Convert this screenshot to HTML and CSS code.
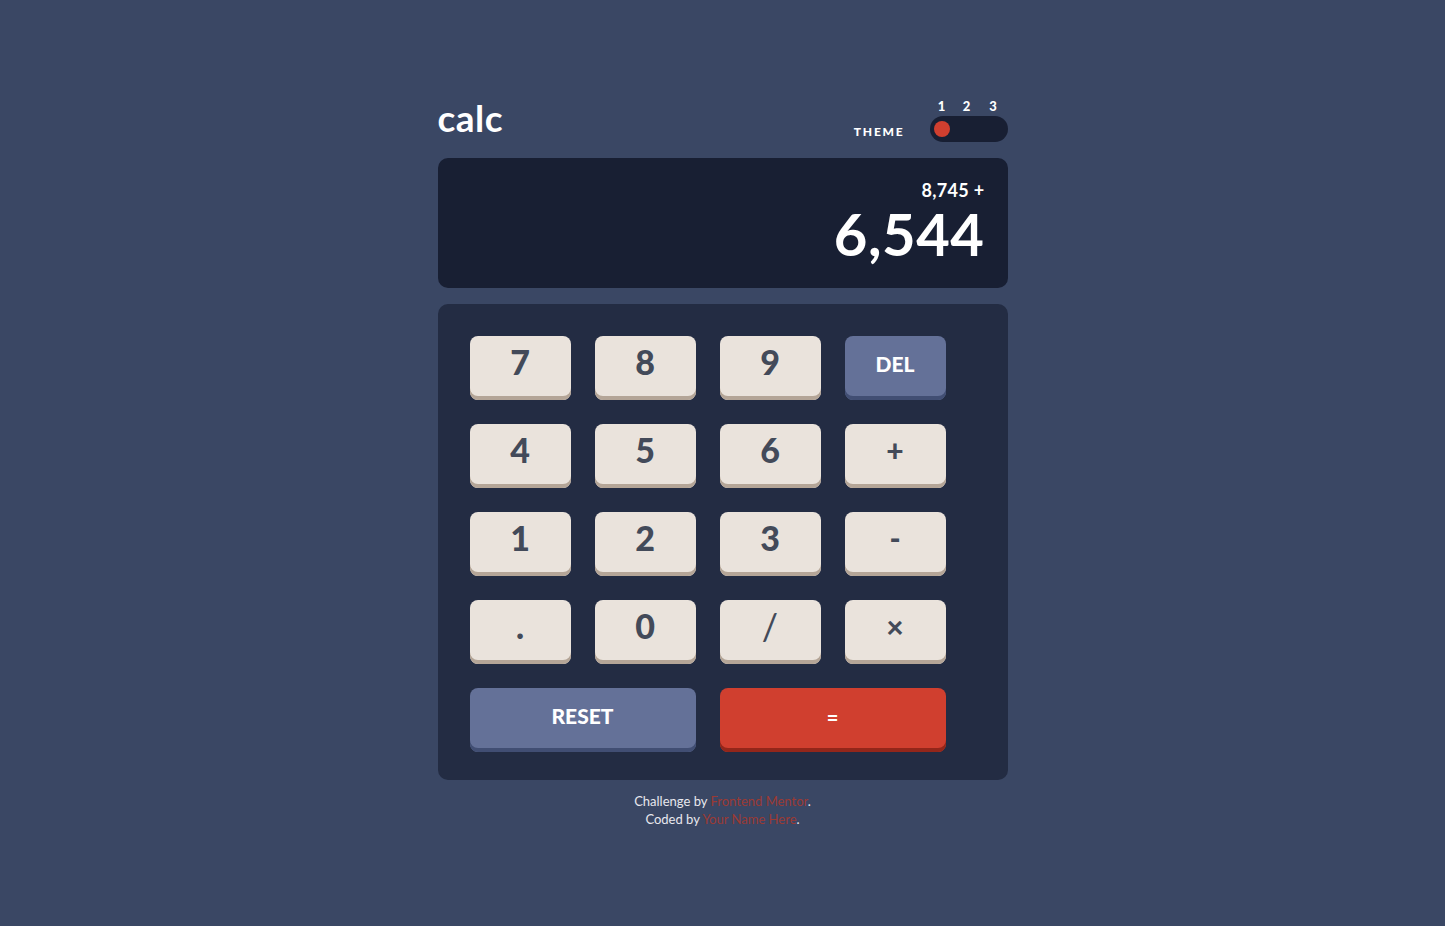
FILE: index.html
```html
<!DOCTYPE html>
<html lang="en">
<head>
<meta charset="utf-8">
<title>Calculator</title>
<link rel="stylesheet" href="styles.css">
</head>
<body>
<main class="calc">
  <header class="top">
    <h1 class="logo">calc</h1>
    <div class="theme">
      <span class="theme-label">THEME</span>
      <div class="switch">
        <div class="switch-nums"><span>1</span><span>2</span><span>3</span></div>
        <div class="switch-track"><span class="switch-ball"></span></div>
      </div>
    </div>
  </header>
  <section class="screen">
    <div class="prev">8,745 +</div>
    <div class="current">6,544</div>
  </section>
  <section class="keypad">
    <button class="key">7</button>
    <button class="key">8</button>
    <button class="key">9</button>
    <button class="key key-blue">DEL</button>
    <button class="key">4</button>
    <button class="key">5</button>
    <button class="key">6</button>
    <button class="key key-op">+</button>
    <button class="key">1</button>
    <button class="key">2</button>
    <button class="key">3</button>
    <button class="key key-op">-</button>
    <button class="key">.</button>
    <button class="key">0</button>
    <button class="key key-thin">/</button>
    <button class="key key-op">×</button>
    <button class="key key-blue key-wide">RESET</button>
    <button class="key key-red key-wide">=</button>
  </section>
  <footer class="credit">
    <p>Challenge by <a href="#">Frontend Mentor</a>.</p>
    <p>Coded by <a href="#">Your Name Here</a>.</p>
  </footer>
</main>
</body>
</html>
```
FILE: styles.css
```css
* { box-sizing: border-box; }
html, body { margin: 0; padding: 0; }
body {
  background: #3a4764;
  font-family: "Lato", "Noto Sans", sans-serif;
  color: #ffffff;
  min-height: 926px;
}
.calc {
  width: 570px;
  margin: 0 auto;
  padding-top: 96px;
  display: flex;
  flex-direction: column;
}
.top {
  display: flex;
  justify-content: space-between;
  align-items: flex-end;
  height: 46px;
  margin-bottom: 16px;
}
.logo {
  margin: 0 0 6px 0;
  font-size: 37px;
  font-weight: 700;
  line-height: 1;
  letter-spacing: 0.5px;
}
.theme {
  display: flex;
  align-items: flex-end;
  gap: 25px;
}
.theme-label {
  font-size: 12px;
  font-weight: 900;
  letter-spacing: 1.8px;
  margin-bottom: 3px;
}
.switch {
  display: flex;
  flex-direction: column;
  gap: 4px;
}
.switch-nums {
  display: grid;
  grid-template-columns: 24px 26px 27px;
  font-size: 13px;
  font-weight: 900;
  line-height: 12px;
  text-align: center;
}
.switch-track {
  width: 78px;
  height: 26px;
  border-radius: 13px;
  background: #181f33;
  padding: 5px 4px;
}
.switch-ball {
  display: block;
  width: 16px;
  height: 16px;
  border-radius: 50%;
  background: #d03f2f;
}
.screen {
  height: 130px;
  border-radius: 10px;
  background: #181f33;
  padding: 20px 23px 0 0;
  text-align: right;
}
.prev {
  font-size: 18px;
  font-weight: 700;
  line-height: 24px;
  letter-spacing: 0.3px;
}
.current {
  font-size: 58px;
  font-weight: 700;
  line-height: 64px;
  letter-spacing: 0.5px;
}
.keypad {
  margin-top: 16px;
  background: #232c43;
  border-radius: 10px;
  padding: 32px 62px 28px 32px;
  display: grid;
  grid-template-columns: repeat(4, 101px);
  grid-auto-rows: 64px;
  column-gap: 24px;
  row-gap: 24px;
}
.key {
  border: none;
  border-radius: 8px;
  background: #eae3dc;
  box-shadow: inset 0 -4px 0 #b4a597;
  color: #434a59;
  font-family: "Lato", "Noto Sans", sans-serif;
  font-size: 34px;
  font-weight: 900;
  padding: 0 0 12px 0;
  line-height: 1;
  cursor: pointer;
}
.key-op { font-size: 30px; font-weight: 900; }
.key-thin { font-weight: 400; font-size: 36px; }
.key-blue {
  background: #647198;
  box-shadow: inset 0 -4px 0 #414e73;
  color: #ffffff;
  font-size: 21px;
  font-weight: 900;
  padding-bottom: 10px;
}
.key-red {
  background: #d03f2f;
  box-shadow: inset 0 -4px 0 #93261a;
  color: #ffffff;
  font-size: 20px;
  font-weight: 900;
  padding-bottom: 6px;
}
.key-wide { grid-column: span 2; }
.credit {
  margin-top: 12px;
  text-align: center;
  font-size: 13px;
  line-height: 18px;
  color: #e8e8ee;
}
.credit p { margin: 0; }
.credit a {
  color: #9c3a34;
  text-decoration: none;
}
```
